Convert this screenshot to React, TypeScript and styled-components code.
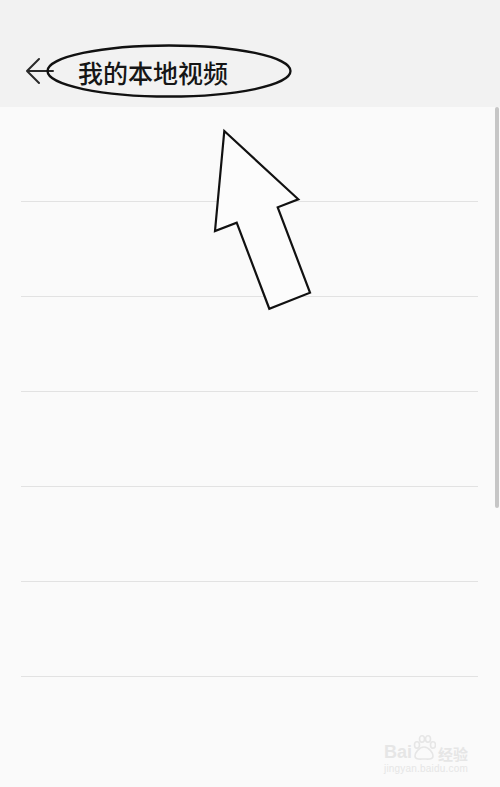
import React from 'react';
import styled, { createGlobalStyle } from 'styled-components';

const GlobalStyle = createGlobalStyle`
  html, body {
    margin: 0;
    padding: 0;
    background: #fafafa;
    font-family: "Noto Sans CJK SC", "Noto Sans", sans-serif;
  }
`;

const Page = styled.div`
  position: relative;
  width: 500px;
  height: 787px;
  overflow: hidden;
  background-color: #fafafa;
  display: flex;
  flex-direction: column;
`;

const Header = styled.header`
  height: 107px;
  flex-shrink: 0;
  background-color: #f2f2f2;
  box-sizing: border-box;
  padding-top: 44px;
`;

const HeaderRow = styled.div`
  height: 54px;
  display: flex;
  align-items: center;
  padding-left: 26px;
`;

const BackButton = styled.button`
  width: 28px;
  height: 28px;
  padding: 0;
  border: none;
  background: none;
  display: flex;
  align-items: center;
  justify-content: center;
  cursor: pointer;
`;

const TitleWrap = styled.div`
  position: relative;
  width: 246px;
  height: 54px;
  margin-left: -8px;
  box-sizing: border-box;
  padding-left: 32px;
  display: flex;
  align-items: center;
`;

const Ring = styled.svg`
  position: absolute;
  left: 0;
  top: 0;
`;

const Title = styled.h1`
  position: relative;
  margin: 0;
  font-size: 25px;
  font-weight: 500;
  color: #161616;
  line-height: 1;
  padding-top: 2px;
`;

const List = styled.ul`
  list-style: none;
  margin: 0;
  padding: 0;
  flex: 1;
`;

const Row = styled.li`
  height: 95px;
  margin: 0 22px 0 21px;
  box-sizing: border-box;
  border-bottom: 1px solid ${(p: { $last?: boolean }) => (p.$last ? 'transparent' : '#e2e2e2')};
`;

const Scrollbar = styled.div`
  position: absolute;
  right: 1px;
  top: 107px;
  width: 4px;
  height: 401px;
  border-radius: 2px;
  background-color: #c6c6c6;
`;

const Pointer = styled.svg`
  position: absolute;
  left: 0;
  top: 0;
  pointer-events: none;
`;

const Watermark = styled.div`
  position: absolute;
  left: 384px;
  top: 731px;
  color: #e6e6e6;
  font-family: "Liberation Sans", Arial, sans-serif;
`;

const MarkTop = styled.div`
  display: flex;
  align-items: flex-end;
  height: 30px;
`;

const MarkBig = styled.span`
  font-size: 18px;
  font-weight: 700;
  line-height: 1;
`;

const MarkCn = styled.span`
  font-family: "Noto Sans CJK SC", sans-serif;
  font-size: 15px;
  font-weight: 700;
  line-height: 1;
  margin-left: 2px;
`;

const MarkUrl = styled.div`
  font-size: 10px;
  margin-top: 2px;
  letter-spacing: 0.2px;
`;

function BackIcon() {
  return (
    <svg width="28" height="28" viewBox="0 0 28 28">
      <path d="M1 14 H27 M13 2 L1 14 L13 26" fill="none" stroke="#2a2a2a" strokeWidth="2" strokeLinecap="round" strokeLinejoin="round" />
    </svg>
  );
}

function Paw() {
  return (
    <svg width="24" height="26" viewBox="0 0 24 26">
      <g fill="none" stroke="#e6e6e6" strokeWidth="1.6">
        <ellipse cx="5" cy="10" rx="2.5" ry="3.2" />
        <ellipse cx="10" cy="4" rx="2.5" ry="3.2" />
        <ellipse cx="16" cy="4" rx="2.5" ry="3.2" />
        <ellipse cx="21" cy="10" rx="2.5" ry="3.2" />
        <path d="M12 12 C7 12 3 18 3 21 C3 25 8 24 12 24 C16 24 21 25 21 21 C21 18 17 12 12 12 Z" />
      </g>
    </svg>
  );
}

const rows = [0, 1, 2, 3, 4, 5, 6];

export default function App() {
  return (
    <>
      <GlobalStyle />
      <Page>
        <Header>
          <HeaderRow>
            <BackButton aria-label="返回">
              <BackIcon />
            </BackButton>
            <TitleWrap>
              <Ring width="246" height="54" viewBox="0 0 246 54">
                <ellipse cx="123" cy="27" rx="121.5" ry="25.5" fill="none" stroke="#111" strokeWidth="2.3" />
              </Ring>
              <Title>我的本地视频</Title>
            </TitleWrap>
          </HeaderRow>
        </Header>
        <List>
          {rows.map((i) => (
            <Row key={i} $last={i === rows.length - 1} />
          ))}
        </List>
        <Scrollbar />
        <Pointer width="500" height="787" viewBox="0 0 500 787">
          <polygon
            points="224.3,131 298.3,199.3 277.7,207.3 310,292.7 269.3,308.7 236.7,222.7 215,231"
            fill="#fcfcfc"
            stroke="#111"
            strokeWidth="2.2"
            strokeLinejoin="miter"
          />
        </Pointer>
        <Watermark>
          <MarkTop>
            <MarkBig>Bai</MarkBig>
            <Paw />
            <MarkCn>经验</MarkCn>
          </MarkTop>
          <MarkUrl>jingyan.baidu.com</MarkUrl>
        </Watermark>
      </Page>
    </>
  );
}
